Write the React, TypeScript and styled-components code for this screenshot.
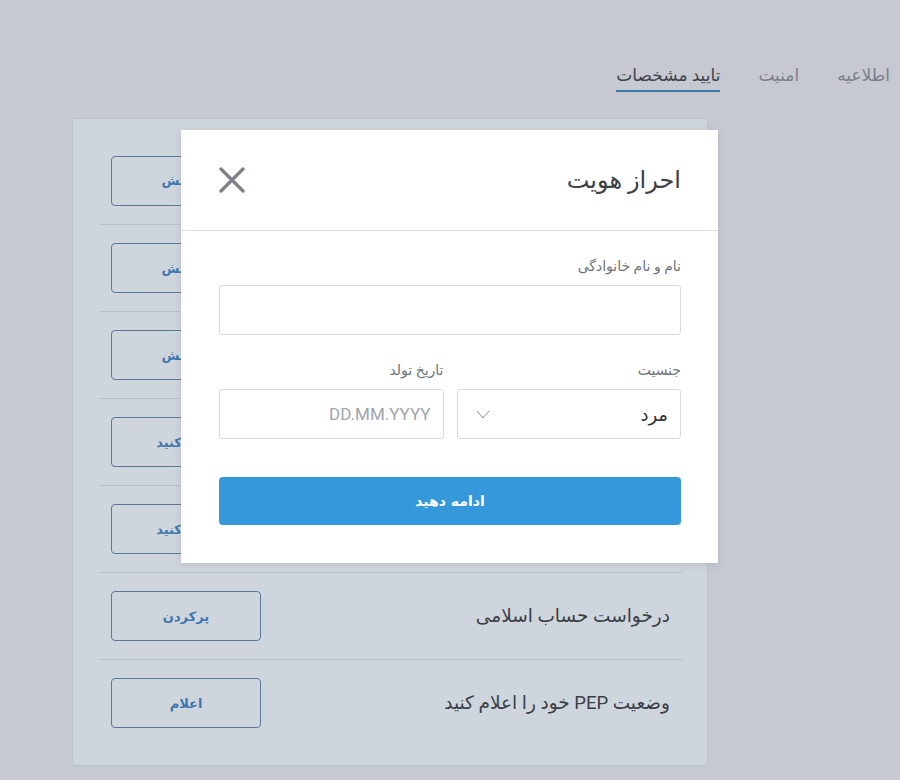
import React from 'react';
import styled, { createGlobalStyle } from 'styled-components';

const GlobalStyle = createGlobalStyle`
  html, body {
    margin: 0;
    padding: 0;
    background: #c6c9d1;
  }
  body {
    font-family: Roboto, 'DejaVu Sans', sans-serif;
    direction: rtl;
  }
  * {
    box-sizing: border-box;
  }
`;

const Page = styled.div`
  position: relative;
  width: 900px;
  height: 780px;
  overflow: hidden;
  padding: 0 10px 0 0;
  display: flex;
  flex-direction: column;
`;

const Tabs = styled.nav`
  display: flex;
  gap: 38px;
  height: 118px;
  padding-top: 62px;
`;

const Tab = styled.div<{ $active?: boolean }>`
  font-size: 17px;
  color: ${(p) => (p.$active ? '#3d434a' : '#7a8089')};
  height: 30px;
  line-height: 26px;
  border-bottom: 2px solid ${(p) => (p.$active ? '#3b7aa6' : 'transparent')};
`;

const Card = styled.section`
  width: 636px;
  margin-right: 182px;
  height: 648px;
  background: #cfd5dd;
  border: 1px solid #bdc3cb;
  border-radius: 3px;
  padding: 18px 24px 0 26px;
`;

const Row = styled.div<{ $first?: boolean }>`
  display: flex;
  align-items: center;
  justify-content: space-between;
  height: 87px;
  padding: 0 13px 0 12px;
  border-top: ${(p) => (p.$first ? 'none' : '1px solid #b9bfc8')};
`;

const RowText = styled.div`
  font-size: 18.5px;
  color: #3a3f46;
`;

const OutlineButton = styled.button`
  width: 150px;
  height: 50px;
  background: transparent;
  border: 1px solid #58789c;
  border-radius: 4px;
  color: #3d77b0;
  font-family: 'DejaVu Sans', sans-serif;
  font-size: 13px;
  font-weight: bold;
`;

const Modal = styled.div`
  position: absolute;
  left: 181px;
  top: 130px;
  width: 537px;
  background: #ffffff;
  box-shadow: 0 2px 8px rgba(40, 50, 70, 0.12);
`;

const ModalHeader = styled.header`
  height: 101px;
  display: flex;
  align-items: center;
  justify-content: space-between;
  padding: 0 37px 0 38px;
  border-bottom: 1px solid #dcdfe3;
`;

const ModalTitle = styled.h2`
  margin: 0;
  font-size: 24px;
  font-weight: normal;
  color: #3b4046;
`;

const CloseButton = styled.button`
  background: none;
  border: none;
  padding: 0;
  width: 26px;
  height: 26px;
  display: flex;
  align-items: center;
  justify-content: center;
`;

const ModalBody = styled.div`
  padding: 26px 37px 38px 38px;
  display: flex;
  flex-direction: column;
`;

const Field = styled.div`
  display: flex;
  flex-direction: column;
  flex: 1;
`;

const Label = styled.label`
  font-size: 14px;
  color: #6d737a;
  line-height: 18px;
  margin-bottom: 10px;
`;

const FieldRow = styled.div`
  display: flex;
  gap: 13px;
  margin-top: 26px;
`;

const Input = styled.div`
  height: 50px;
  border: 1px solid #d9dcdf;
  border-radius: 3px;
  display: flex;
  align-items: center;
  justify-content: space-between;
  padding: 0 12px 0 18px;
`;

const SelectValue = styled.span`
  font-size: 18px;
  color: #2f3338;
`;

const Placeholder = styled.span`
  font-family: Roboto, sans-serif;
  font-size: 17px;
  color: #a0a5ab;
`;

const SubmitButton = styled.button`
  margin-top: 38px;
  height: 48px;
  border: none;
  border-radius: 4px;
  background: #3498db;
  color: #ffffff;
  font-family: 'DejaVu Sans', sans-serif;
  font-size: 14px;
  font-weight: bold;
`;

const rows = [
  { text: 'اطلاعات شخصی', action: 'ویرایش' },
  { text: 'اطلاعات تماس', action: 'ویرایش' },
  { text: 'اطلاعات مالی', action: 'ویرایش' },
  { text: 'مدارک هویتی', action: 'آپلود کنید' },
  { text: 'تایید آدرس', action: 'آپلود کنید' },
  { text: 'درخواست حساب اسلامی', action: 'پرکردن' },
  { text: 'وضعیت PEP خود را اعلام کنید', action: 'اعلام' },
];

const App: React.FC = () => {
  return (
    <>
      <GlobalStyle />
      <Page>
        <Tabs>
          <Tab>اطلاعیه</Tab>
          <Tab>امنیت</Tab>
          <Tab $active>تایید مشخصات</Tab>
        </Tabs>

        <Card>
          {rows.map((row, index) => (
            <Row key={index} $first={index === 0}>
              <RowText>{row.text}</RowText>
              <OutlineButton>{row.action}</OutlineButton>
            </Row>
          ))}
        </Card>

        <Modal>
          <ModalHeader>
            <ModalTitle>احراز هویت</ModalTitle>
            <CloseButton aria-label="close">
              <svg width="26" height="26" viewBox="0 0 26 26">
                <path d="M2 2 L24 24 M24 2 L2 24" stroke="#7d8187" strokeWidth="3.2" strokeLinecap="round" />
              </svg>
            </CloseButton>
          </ModalHeader>
          <ModalBody>
            <Field>
              <Label>نام و نام خانوادگی</Label>
              <Input />
            </Field>
            <FieldRow>
              <Field>
                <Label>جنسیت</Label>
                <Input>
                  <SelectValue>مرد</SelectValue>
                  <svg width="14" height="9" viewBox="0 0 14 9">
                    <path d="M1 1 L7 8 L13 1" fill="none" stroke="#8a9097" strokeWidth="1" />
                  </svg>
                </Input>
              </Field>
              <Field>
                <Label>تاریخ تولد</Label>
                <Input>
                  <Placeholder>DD.MM.YYYY</Placeholder>
                </Input>
              </Field>
            </FieldRow>
            <SubmitButton>ادامه دهید</SubmitButton>
          </ModalBody>
        </Modal>
      </Page>
    </>
  );
};

export default App;
